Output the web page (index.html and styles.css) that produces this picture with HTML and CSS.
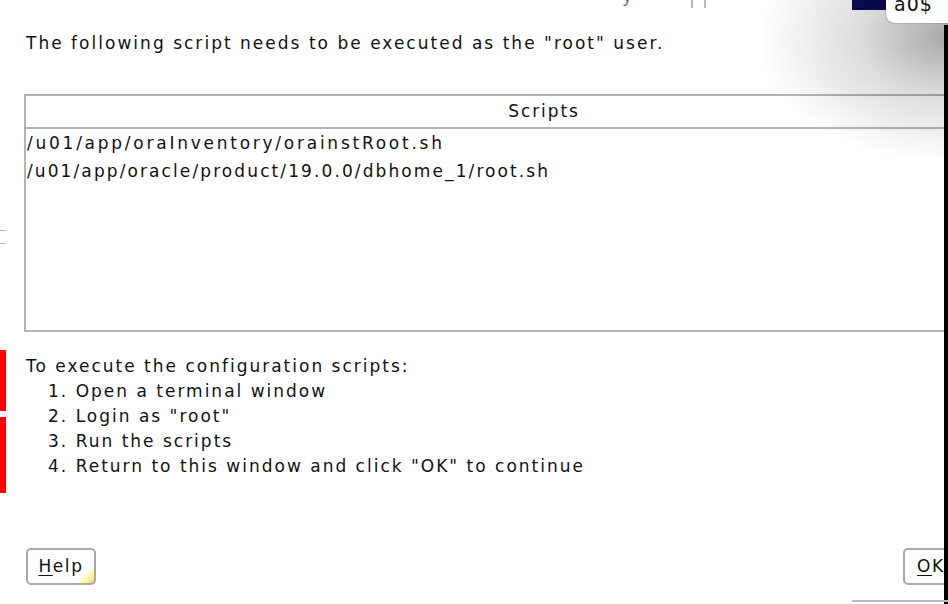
FILE: index.html
```html
<!DOCTYPE html>
<html lang="en">
<head>
<meta charset="utf-8">
<title>Execute Configuration Scripts</title>
<link rel="stylesheet" href="styles.css">
</head>
<body>
<div class="screen">
  <div class="backdrop-top">
    <span class="frag-y">y</span>
    <span class="frag-bar"></span>
    <span class="frag-bar"></span>
  </div>
  <div class="navy-block"></div>
  <div class="tip-shadow"></div>
  <div class="tooltip">a0$</div>
  <div class="edge-lines"><span></span><span></span></div>
  <div class="red-bar red-bar-1"></div>
  <div class="red-bar red-bar-2"></div>
  <div class="right-frame"></div>
  <div class="bottom-line"></div>

  <main class="dialog">
    <p class="intro">The following script needs to be executed as the "root" user.</p>

    <div class="scripts-table">
      <div class="thead">Scripts</div>
      <div class="tbody">
        <div class="row row-wide">/u01/app/oraInventory/orainstRoot.sh</div>
        <div class="row row-tight">/u01/app/oracle/product/19.0.0/dbhome_1/root.sh</div>
      </div>
    </div>

    <div class="instructions">
      <p class="lead">To execute the configuration scripts:</p>
      <ol class="steps">
        <li>Open a terminal window</li>
        <li>Login as "root"</li>
        <li>Run the scripts</li>
        <li>Return to this window and click "OK" to continue</li>
      </ol>
    </div>

    <div class="buttons">
      <button class="btn btn-help"><u>H</u>elp</button>
      <button class="btn btn-ok"><u>O</u>K</button>
    </div>
  </main>
</div>
</body>
</html>
```

FILE: styles.css
```css
html, body {
  margin: 0;
  padding: 0;
  background: #ffffff;
}

.screen {
  position: relative;
  width: 948px;
  height: 604px;
  overflow: hidden;
  background: #ffffff;
  font-family: "DejaVu Sans", Verdana, sans-serif;
  font-size: 17px;
  color: #111111;
}

.dialog {
  padding: 33px 0 0 24px;
}

.intro {
  margin: 0 0 41px 2px;
  line-height: 20px;
  letter-spacing: 2.02px;
}

.scripts-table {
  width: 1036px;
  border: 2px solid #b4b4b4;
  border-right: none;
  background: #ffffff;
}

.thead {
  height: 31px;
  line-height: 31px;
  text-align: center;
  letter-spacing: 1.9px;
  border-bottom: 2px solid #b4b4b4;
}

.tbody {
  height: 201px;
}

.row {
  height: 28px;
  line-height: 28px;
  padding-left: 1px;
}

.row-wide {
  letter-spacing: 2.75px;
}

.row-tight {
  letter-spacing: 2.1px;
}

.instructions {
  margin: 22px 0 0 2px;
  line-height: 25px;
  letter-spacing: 2px;
}

.lead {
  margin: 0;
}

.steps {
  margin: 0;
  padding-left: 22px;
  list-style: decimal inside;
}

.buttons {
  display: flex;
  justify-content: space-between;
  width: 937px;
  margin: 69px 0 0 2px;
}

.btn {
  height: 37px;
  border: 2px solid #a9a9a9;
  border-radius: 5px;
  background:
    linear-gradient(135deg, rgba(255, 255, 255, 0) 48%, #fffcc0 52%, #fff3a0 72%, #f2d49a 90%, #d8b8b0 100%) no-repeat right bottom / 16px 16px,
    #ffffff;
  font-family: "DejaVu Sans", Verdana, sans-serif;
  font-size: 17px;
  letter-spacing: 1.6px;
  color: #111111;
  padding: 0 9px 2px 9px;
}

.btn u {
  text-underline-offset: 3px;
}

.btn-help {
  width: 70px;
}

.btn-ok {
  width: 60px;
  text-align: left;
  padding-left: 12px;
}

/* ---- surrounding desktop fragments (overlays) ---- */

.backdrop-top {
  position: absolute;
  left: 622px;
  top: -14px;
  display: flex;
  align-items: flex-start;
  gap: 11px;
  color: #777;
}

.frag-y {
  font-size: 18px;
  line-height: 20px;
  margin-right: 47px;
}

.frag-bar {
  display: block;
  width: 2px;
  height: 22px;
  background: #b8b8b8;
}

.navy-block {
  position: absolute;
  left: 852px;
  top: 0;
  width: 36px;
  height: 10px;
  background: #0c0c55;
}

.tip-shadow {
  position: absolute;
  right: 0;
  top: 0;
  width: 210px;
  height: 170px;
  background: radial-gradient(ellipse 190px 125px at 100% 22%, rgba(0, 0, 0, 0.34), rgba(0, 0, 0, 0.14) 45%, rgba(0, 0, 0, 0) 100%);
  pointer-events: none;
}

.tooltip {
  position: absolute;
  left: 886px;
  top: -8px;
  width: 70px;
  height: 31px;
  padding-left: 8px;
  box-sizing: border-box;
  background: #ffffff;
  border-bottom-left-radius: 9px;
  box-shadow: -1px 1px 1px rgba(0, 0, 0, 0.12);
  font-size: 19px;
  line-height: 25px;
  letter-spacing: 1px;
  color: #111;
}

.edge-lines {
  position: absolute;
  left: 0;
  top: 230px;
  display: flex;
  flex-direction: column;
  gap: 12px;
}

.edge-lines span {
  display: block;
  width: 6px;
  height: 1px;
  background: #b9b9b9;
}

.red-bar {
  position: absolute;
  left: 0;
  width: 6px;
  background: #ff0000;
}

.red-bar-1 {
  top: 350px;
  height: 61px;
}

.red-bar-2 {
  top: 417px;
  height: 76px;
}

.right-frame {
  position: absolute;
  left: 944px;
  top: 25px;
  width: 4px;
  height: 579px;
  background: #000000;
}

.bottom-line {
  position: absolute;
  left: 852px;
  top: 600px;
  width: 96px;
  height: 2px;
  background: #b8b8c8;
}
```
